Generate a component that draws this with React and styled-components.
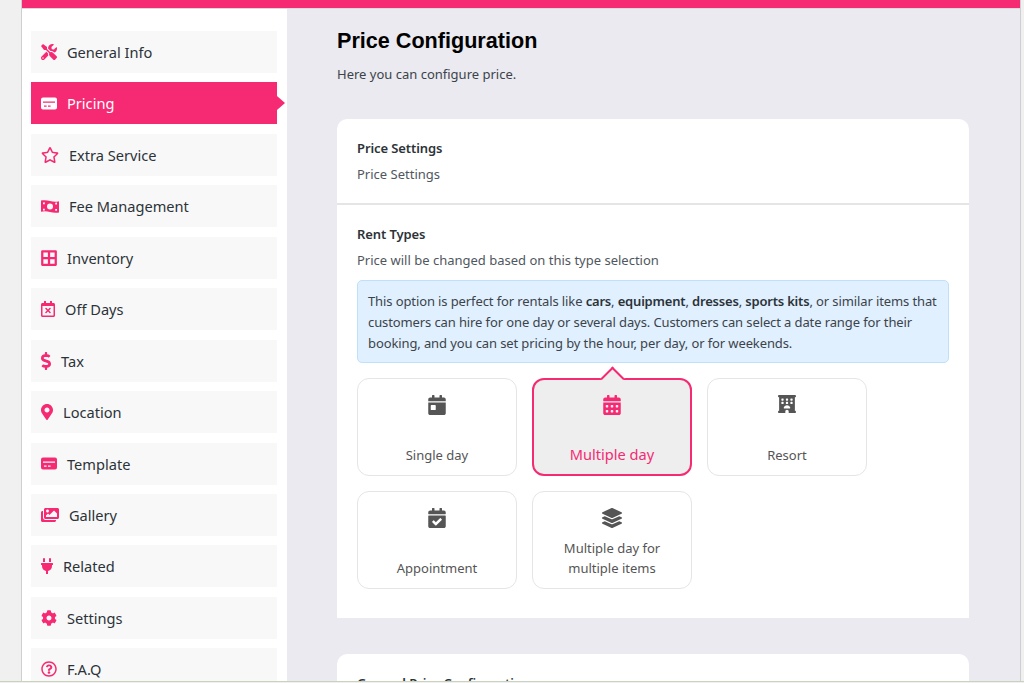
import React from 'react'
import styled, { createGlobalStyle } from 'styled-components'
import {
  FaTools, FaRegStar, FaBorderAll, FaRegCalendarTimes,
  FaDollarSign, FaMapMarkerAlt, FaImages, FaPlug, FaCog, FaRegQuestionCircle,
  FaCalendarDay, FaCalendarAlt, FaCalendarCheck, FaLayerGroup,
} from 'react-icons/fa'
import { FaHotel } from 'react-icons/fa6'

const CardIcon = () => (
  <svg viewBox="0 0 16 13" fill="currentColor">
    <path
      fillRule="evenodd"
      d="M2 .5h12a2 2 0 0 1 2 2v8a2 2 0 0 1-2 2H2a2 2 0 0 1-2-2v-8a2 2 0 0 1 2-2zM2 4.5v1.2h12V4.5zM3 8.4v1.3h2.6V8.4zM7 8.4v1.3h2.6V8.4z"
    />
  </svg>
)

const BillIcon = () => (
  <svg viewBox="0 0 18 15" fill="currentColor">
    <path
      fillRule="evenodd"
      d="M0 1.6C3 .8 6 1.2 9 2s6 1.2 9 .2v11.2c-3 .8-6 .4-9-.4s-6-1.2-9-.2zM9 4.6a3 3 0 1 0 0 6 3 3 0 0 0 0-6zM2 3.4v1.8h1.8V3.2zM14.2 3.8v1.8H16V3.6zM2 9.8v1.8h1.8V9.8zM14.2 10v1.8H16V10z"
    />
  </svg>
)

const navItems = [
  { label: 'General Info', icon: FaTools, w: 16, h: 16 },
  { label: 'Pricing', icon: CardIcon, w: 16, h: 13, active: true },
  { label: 'Extra Service', icon: FaRegStar, w: 18, h: 16 },
  { label: 'Fee Management', icon: BillIcon, w: 18, h: 15 },
  { label: 'Inventory', icon: FaBorderAll, w: 16, h: 18 },
  { label: 'Off Days', icon: FaRegCalendarTimes, w: 14, h: 16 },
  { label: 'Tax', icon: FaDollarSign, w: 10, h: 18 },
  { label: 'Location', icon: FaMapMarkerAlt, w: 12, h: 16 },
  { label: 'Template', icon: CardIcon, w: 16, h: 13 },
  { label: 'Gallery', icon: FaImages, w: 18, h: 16 },
  { label: 'Related', icon: FaPlug, w: 12, h: 16 },
  { label: 'Settings', icon: FaCog, w: 16, h: 16 },
  { label: 'F.A.Q', icon: FaRegQuestionCircle, w: 16, h: 16 },
]

const rentTypes = [
  { label: 'Single day', icon: FaCalendarDay },
  { label: 'Multiple day', icon: FaCalendarAlt, active: true },
  { label: 'Resort', icon: FaHotel, size: 18 },
  { label: 'Appointment', icon: FaCalendarCheck },
  { label: 'Multiple day for multiple items', icon: FaLayerGroup },
]

export default function App() {
  return (
    <>
      <GlobalStyle />
      <Frame>
        <Shell>
          <TopBar />
          <Columns>
            <Sidebar>
              {navItems.map(({ label, icon: Icon, w, h, active }) => (
                <NavItem key={label} $active={active} $w={w} $h={h}>
                  <Icon />
                  <span>{label}</span>
                </NavItem>
              ))}
            </Sidebar>
            <Main>
              <Title>Price Configuration</Title>
              <Subtitle>Here you can configure price.</Subtitle>
              <Card>
                <CardHead>
                  <Label>Price Settings</Label>
                  <Help>Price Settings</Help>
                </CardHead>
                <CardBody>
                  <Label>Rent Types</Label>
                  <Help>Price will be changed based on this type selection</Help>
                  <Notice>
                    This option is perfect for rentals like <b>cars</b>, <b>equipment</b>, <b>dresses</b>,{' '}
                    <b>sports kits</b>, or similar items that customers can hire for one day or several days.
                    Customers can select a date range for their booking, and you can set pricing by the hour,
                    per day, or for weekends.
                  </Notice>
                  <TileGrid>
                    {rentTypes.map(({ label, icon: Icon, size, active }) => (
                      <Tile key={label} $active={active}>
                        <Icon size={size || 20} />
                        <TileLabel $active={active}>{label}</TileLabel>
                      </Tile>
                    ))}
                  </TileGrid>
                </CardBody>
              </Card>
              <NextCard>
                <Label>General Price Configuration</Label>
              </NextCard>
            </Main>
          </Columns>
        </Shell>
      </Frame>
    </>
  )
}

const GlobalStyle = createGlobalStyle`
  html, body {
    margin: 0;
    height: 100%;
    overflow: hidden;
  }
  body {
    background: #f0f0f1;
    font-family: "Noto Sans", "Open Sans", sans-serif;
    font-size: 13px;
    color: #50575e;
  }
`

const Frame = styled.div`
  box-sizing: border-box;
  height: 682px;
  padding: 0 3px 0 21px;
  border-bottom: 1px solid #c9d2bd;
  overflow: hidden;
`

const Shell = styled.div`
  display: flex;
  flex-direction: column;
  height: 100%;
  border-left: 1px solid #cfcfcf;
  border-right: 1px solid #cfcfcf;
  overflow: hidden;
`

const TopBar = styled.div`
  flex: none;
  height: 8px;
  border-bottom: 1px solid #d8d8de;
  background: #f52a72;
`

const Columns = styled.div`
  flex: 1;
  display: flex;
  min-height: 0;
`

const Sidebar = styled.nav`
  flex: none;
  box-sizing: border-box;
  width: 265px;
  padding: 22px 10px 0 9px;
  display: flex;
  flex-direction: column;
  gap: 9.45px;
  background: #fff;
`

const NavItem = styled.div`
  position: relative;
  flex: none;
  display: flex;
  align-items: center;
  gap: 10px;
  height: 42px;
  padding-left: 10px;
  background: ${p => (p.$active ? '#f52a72' : '#f8f8f8')};
  color: ${p => (p.$active ? '#fff' : '#2c3338')};
  font-size: 14.6px;

  svg {
    flex: none;
    width: ${p => p.$w}px;
    height: ${p => p.$h}px;
    color: ${p => (p.$active ? '#fff' : '#f52a72')};
  }

  ${p => p.$active && `
    &::after {
      content: '';
      position: absolute;
      right: -8px;
      top: 50%;
      margin-top: -7.5px;
      border-left: 8px solid #f52a72;
      border-top: 7.5px solid transparent;
      border-bottom: 7.5px solid transparent;
    }
  `}
`

const Main = styled.main`
  flex: 1;
  min-width: 0;
  padding: 18px 51px 0 50px;
  background: #eaeaf0;
`

const Title = styled.h1`
  margin: 0;
  font-family: "Liberation Sans", Arial, sans-serif;
  font-size: 21.6px;
  line-height: 28px;
  font-weight: 700;
  color: #000;
`

const Subtitle = styled.p`
  margin: 9px 0 0;
  line-height: 20px;
  color: #3c434a;
`

const Card = styled.section`
  margin-top: 35px;
  background: #fff;
  border-radius: 10px 10px 0 0;
`

const CardHead = styled.div`
  padding: 19px 20px;
  border-bottom: 2px solid #e5e5e5;
`

const CardBody = styled.div`
  padding: 19px 20px 29px;
`

const Label = styled.div`
  line-height: 20px;
  font-weight: 600;
  letter-spacing: -0.1px;
  color: #2c3338;
`

const Help = styled.div`
  margin-top: 6px;
  line-height: 20px;
`

const Notice = styled.div`
  margin-top: 10px;
  padding: 10px 10px 8px;
  border: 1px solid #bfe0fa;
  border-radius: 5px;
  background: #e0f0ff;
  line-height: 21px;
  letter-spacing: -0.11px;
  color: #3c434a;

  b {
    font-weight: 600;
    letter-spacing: -0.2px;
    color: #2c3338;
  }
`

const TileGrid = styled.div`
  display: grid;
  grid-template-columns: repeat(3, 160px);
  gap: 15px;
  margin-top: 15px;
`

const Tile = styled.div`
  position: relative;
  box-sizing: border-box;
  height: 98px;
  display: flex;
  flex-direction: column;
  align-items: center;
  padding: 16px 12px 0;
  border: ${p => (p.$active ? '2px solid #f52a72' : '1px solid #e5e5e5')};
  border-radius: 12px;
  background: ${p => (p.$active ? '#eeeeee' : '#fff')};
  color: ${p => (p.$active ? '#f52a72' : '#555')};

  svg {
    flex: none;
    margin-top: ${p => (p.$active ? '-1px' : 0)};
  }

  ${p => p.$active && `
    &::before {
      content: '';
      position: absolute;
      top: -10.5px;
      left: 50%;
      width: 17px;
      height: 17px;
      margin-left: -8.5px;
      box-sizing: border-box;
      border-top: 2px solid #f52a72;
      border-left: 2px solid #f52a72;
      background: #eeeeee;
      transform: rotate(45deg);
    }
  `}
`

const TileLabel = styled.div`
  margin-top: auto;
  margin-bottom: 10px;
  text-align: center;
  font-size: ${p => (p.$active ? '14.6px' : '13px')};
  line-height: 20px;
`

const NextCard = styled.section`
  margin-top: 36px;
  padding: 19px 20px;
  background: #fff;
  border-radius: 10px 10px 0 0;
`
